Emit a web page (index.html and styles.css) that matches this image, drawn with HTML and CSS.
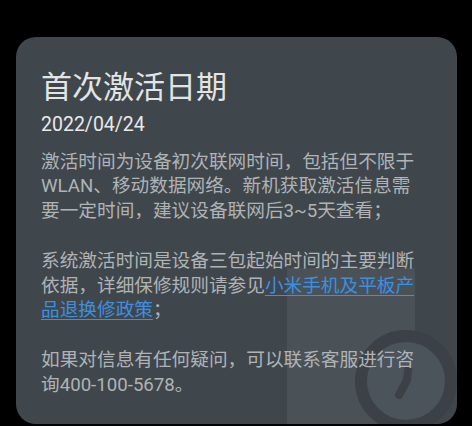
FILE: index.html
```html
<!DOCTYPE html>
<html lang="zh-CN">
<head>
<meta charset="utf-8">
<title>首次激活日期</title>
<link rel="stylesheet" href="styles.css">
</head>
<body>
<div class="page">
  <div class="card">
    <svg class="watermark" width="441" height="387" viewBox="0 0 441 387" aria-hidden="true">
      <rect x="271" y="231" width="128" height="170" fill="#4a5258"/>
      <circle cx="390" cy="344" r="45" fill="#4c545b" stroke="#3b4146" stroke-width="12"/>
      <path d="M392 333 L391 343 L383 358" fill="none" stroke="#3b4146" stroke-width="8" stroke-linecap="round" stroke-linejoin="round"/>
    </svg>
    <div class="content">
      <h1 class="title">首次激活日期</h1>
      <div class="date">2022/04/24</div>
      <p class="para">激活时间为设备初次联网时间，包括但不限于WLAN、移动数据网络。新机获取激活信息需要一定时间，建议设备联网后3~5天查看；</p>
      <p class="para">系统激活时间是设备三包起始时间的主要判断依据，详细保修规则请参见<a class="link" href="#">小米手机及平板产</a><br><a class="link" href="#">品退换修政策</a>；</p>
      <p class="para">如果对信息有任何疑问，可以联系客服进行咨询400-100-5678。</p>
    </div>
  </div>
</div>
</body>
</html>
```

FILE: styles.css
```css
html, body {
  margin: 0;
  padding: 0;
  background: #000;
}

body {
  font-family: Roboto, "Noto Sans CJK SC", "Noto Sans", sans-serif;
  overflow: hidden;
}

.page {
  padding: 37px 15px 0 16px;
}

.card {
  position: relative;
  overflow: hidden;
  width: 441px;
  height: 387px;
  box-sizing: border-box;
  padding: 30px 0 0 25px;
  background: #40474c;
  border-radius: 20px;
}

.watermark {
  position: absolute;
  left: 0;
  top: 0;
}

.content {
  position: relative;
}

.title {
  margin: 0;
  font-family: "Noto Sans CJK SC", sans-serif;
  font-size: 31px;
  line-height: 36px;
  font-weight: 400;
  color: #e3e4e5;
}

.date {
  margin-top: 10px;
  font-size: 19.5px;
  line-height: 24px;
  color: #e8e9ea;
}

.para {
  width: 376px;
  margin: 0 0 24.8px;
  font-size: 18.67px;
  line-height: 24.8px;
  color: #afb3b6;
}

.date + .para {
  margin-top: 12.6px;
}

.link {
  color: #3d8fe0;
  text-decoration: underline;
  text-underline-offset: 3px;
}
```
